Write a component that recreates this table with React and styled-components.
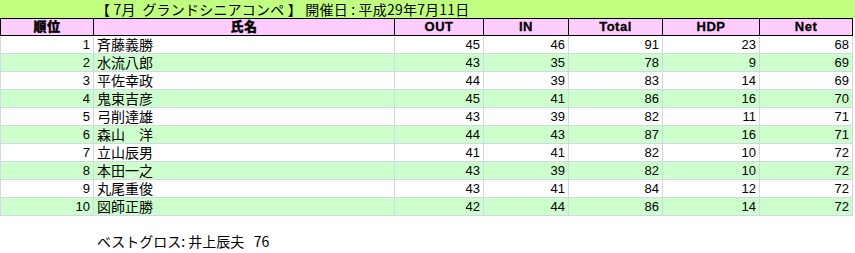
import React from "react";
import styled, { createGlobalStyle } from "styled-components";

const Global = createGlobalStyle`
  html, body { margin: 0; padding: 0; background: #ffffff; }
  body { font-family: "Liberation Sans", "Noto Sans CJK JP", sans-serif; color: #000; }
`;

const Page = styled.div`
  width: 855px;
  height: 253px;
  display: flex;
  flex-direction: column;
`;

const TitleBar = styled.div`
  height: 18px;
  background: #c0ff80;
  display: flex;
  align-items: center;
  padding-left: 96px;
  font-family: "Noto Sans CJK JP", sans-serif;
  font-size: 14px;
  line-height: 18px;
  letter-spacing: 0.2px;
  white-space: pre;
  overflow: hidden;
`;

const Table = styled.table`
  border-collapse: collapse;
  table-layout: fixed;
  width: 853px;
`;

const HeadCell = styled.th`
  height: 16px;
  padding: 0;
  background: #ffccff;
  border: 1px solid #000;
  font-family: "Liberation Sans", "Noto Sans CJK JP", sans-serif;
  font-weight: 900;
  font-size: 13px;
  line-height: 16px;
  text-align: center;
  letter-spacing: 0.5px;
  -webkit-text-stroke: 0.3px #000;
`;

const Row = styled.tr`
  background: ${(p) => (p.$alt ? "#ccffcc" : "#ffffff")};
`;

const Cell = styled.td`
  height: 17px;
  padding: 0 ${(p) => (p.$num ? "3px" : "0")} 0 ${(p) => (p.$num ? "0" : "3px")};
  border: 1px solid #d0d7e5;
  font-family: ${(p) =>
    p.$num ? '"Liberation Sans", sans-serif' : '"Noto Sans CJK JP", sans-serif'};
  font-size: ${(p) => (p.$num ? "13px" : "14px")};
  line-height: 17px;
  text-align: ${(p) => (p.$num ? "right" : "left")};
  white-space: pre;
  overflow: hidden;
`;

const Footer = styled.div`
  margin-top: 16px;
  padding-left: 97px;
  font-family: "Noto Sans CJK JP", sans-serif;
  font-size: 14px;
  line-height: 18px;
  white-space: pre;
`;

const cols = [93, 301, 89, 85, 94, 97, 93];
const heads = ["順位", "氏名", "OUT", "IN", "Total", "HDP", "Net"];

const data = [
  [1, "斉藤義勝", 45, 46, 91, 23, 68],
  [2, "水流八郎", 43, 35, 78, 9, 69],
  [3, "平佐幸政", 44, 39, 83, 14, 69],
  [4, "鬼束吉彦", 45, 41, 86, 16, 70],
  [5, "弓削達雄", 43, 39, 82, 11, 71],
  [6, "森山　洋", 44, 43, 87, 16, 71],
  [7, "立山辰男", 41, 41, 82, 10, 72],
  [8, "本田一之", 43, 39, 82, 10, 72],
  [9, "丸尾重俊", 43, 41, 84, 12, 72],
  [10, "図師正勝", 42, 44, 86, 14, 72],
];

export default function App() {
  return (
    <Page>
      <Global />
      <TitleBar>{"【 7月  グランドシニアコンペ 】 開催日 : 平成29年7月11日"}</TitleBar>
      <Table>
        <colgroup>
          {cols.map((w, i) => (
            <col key={i} style={{ width: w }} />
          ))}
        </colgroup>
        <thead>
          <tr>
            {heads.map((h) => (
              <HeadCell key={h}>{h}</HeadCell>
            ))}
          </tr>
        </thead>
        <tbody>
          {data.map((r, i) => (
            <Row key={i} $alt={i % 2 === 1}>
              {r.map((v, j) => (
                <Cell key={j} $num={j !== 1}>
                  {v}
                </Cell>
              ))}
            </Row>
          ))}
        </tbody>
      </Table>
      <Footer>{"ベストグロス: 井上辰夫   76"}</Footer>
    </Page>
  );
}
